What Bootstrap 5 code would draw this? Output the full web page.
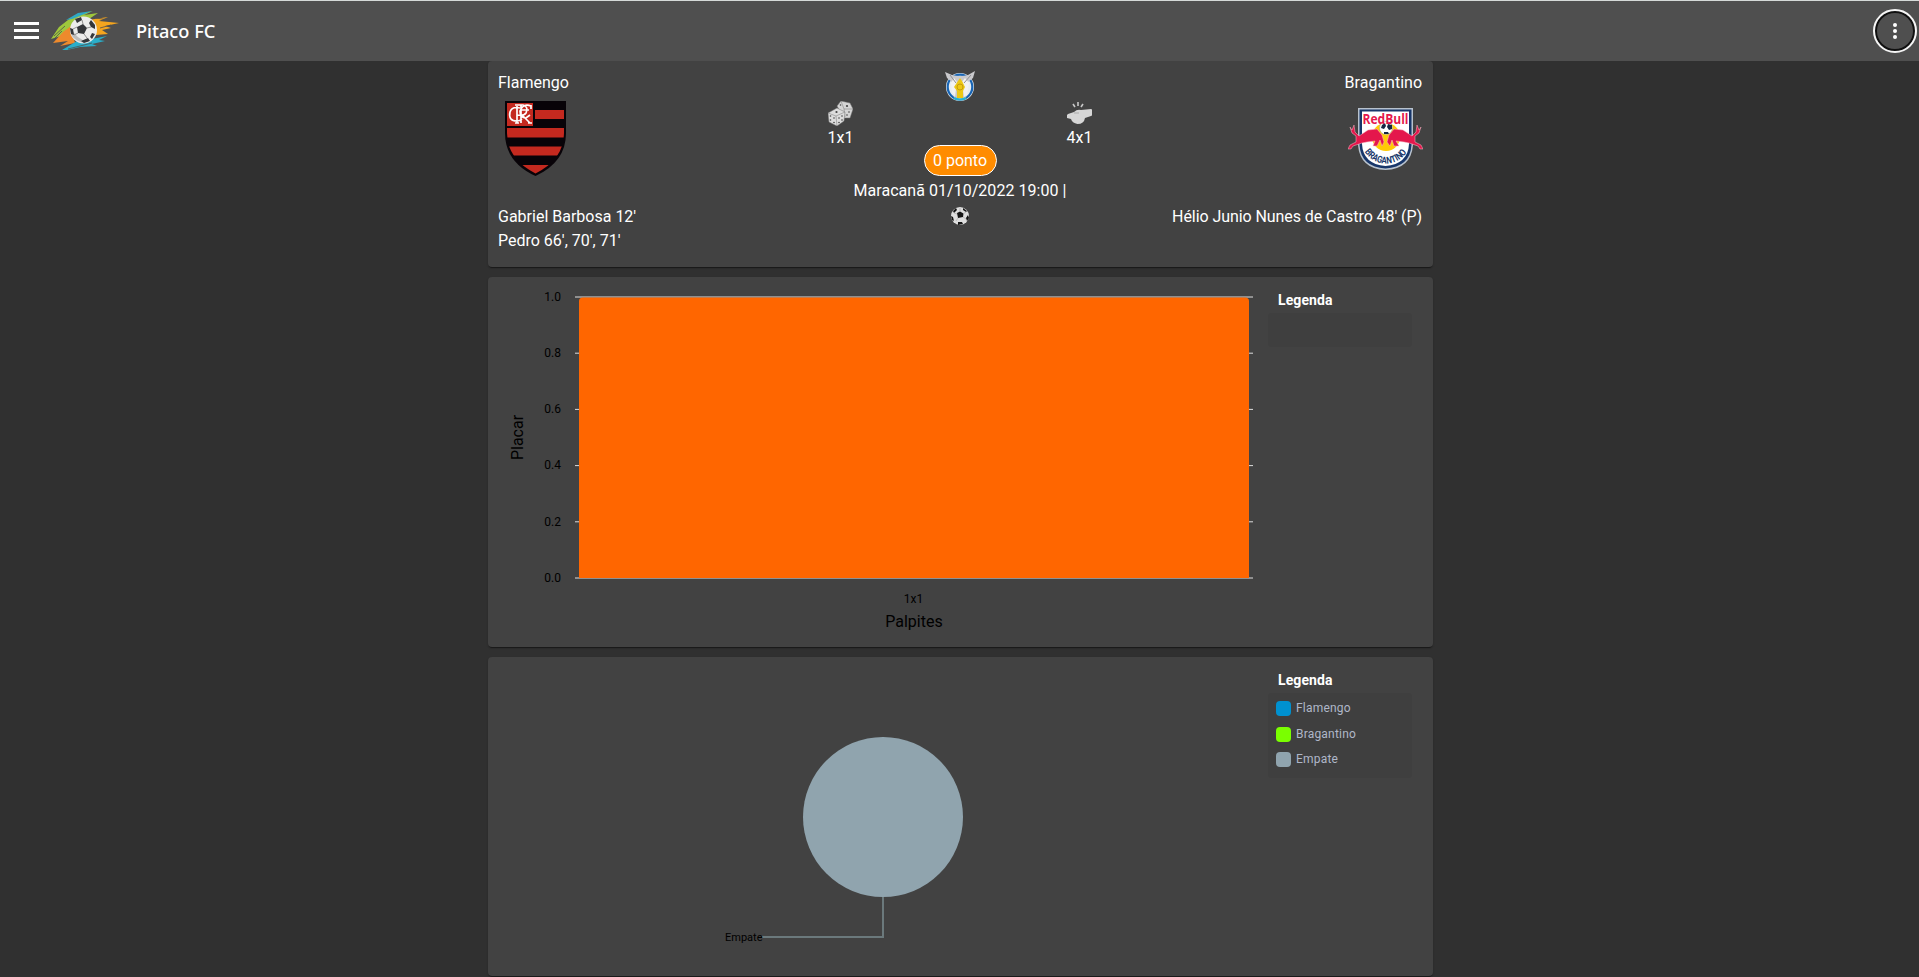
<!DOCTYPE html>
<html lang="pt-BR">
<head>
<meta charset="utf-8">
<meta name="viewport" content="width=device-width, initial-scale=1">
<title>Pitaco FC</title>
<link href="https://cdn.jsdelivr.net/npm/bootstrap@5.3.0/dist/css/bootstrap.min.css" rel="stylesheet">
<style>
body{background:#303030;color:#fff;font-family:Roboto,"Liberation Sans",sans-serif;font-size:16px;line-height:24px;height:977px;overflow:hidden}
svg{display:block;flex:none}
.topbar{height:61px;background:#4f4f4f;border-top:1px solid #d5dad8;padding:0 2px 0 14px}
.menu-icon{margin:-1px 11px 0 0}
.brand-name{font:500 18.2px/24px "Noto Sans","Open Sans",sans-serif;margin-left:16px}
.more-btn{width:44px;height:44px;border:2px solid #f5f5f5;box-shadow:inset 0 0 0 2px #101010;background:#4f4f4f}
.page{width:945px;margin-left:488px;gap:10px}
.panel{background:#424242;border-radius:4px;box-shadow:0 2px 1px -1px rgba(0,0,0,.4),0 1px 2px rgba(0,0,0,.2)}
.match{height:206px;padding:10px}
.match-grid{display:grid;grid-template-columns:223px 478px 224px}
.crest{margin-top:6px}
.guess{width:50%}
.points{background:#ff8c00;border:1px solid #fff;border-radius:16px;width:73px;height:31px;line-height:30px;margin-top:-5px}
.venue{margin-top:3px;letter-spacing:.04px}
.scorers{margin-top:2px}
.away-scorers{padding-right:1px;letter-spacing:-.07px}
.chart-bars{height:370px}
.chart-pie{height:319px}
.legend{width:144px;margin-left:-1px}
.legend h2{font-size:14px;line-height:20px;font-weight:700;margin:0;padding:13px 0 0 10px;height:33px;letter-spacing:.1px}
.legend-box{background:#3f3f3f;border-radius:4px;min-height:34px;margin-top:3px}
.legend-box.filled{height:85px;padding:8px 8px 0}
.legend-row{height:25.6px;font-size:12px;line-height:15px;color:#afb7c8;letter-spacing:.2px;gap:5px}
.swatch{width:15px;height:15px;border-radius:4px}
</style>
</head>
<body>
<header class="topbar d-flex align-items-center">
  <svg class="menu-icon" width="25" height="17" viewBox="0 0 25 17" fill="#fff"><path d="M0 0h25v3H0zM0 7h25v3H0zM0 14h25v3H0z"/></svg>
  <svg width="70" height="42" viewBox="0 0 70 42">
    <path d="M1 29L9 17 18 10 26 5 43 1 34 5 48 3 39 9 26 16 14 25Z" fill="#9fc73c"/>
    <path d="M16 10L28 3 42 1 32 5 22 9Z" fill="#2ea9c6"/>
    <path d="M38 10L58 7 49 11 69 13 55 16 61 18 52 20 58 24 46 25Z" fill="#f5a51e"/>
    <path d="M3 33L13 22 21 16 25 33 10 36 18 31Z" fill="#ee8a2c"/>
    <path d="M12 40L27 31 47 28 57 26 49 30 55 31 42 34 47 36 30 37 17 40Z" fill="#2aaec9"/>
    <path d="M4 26L15 16M2 31L12 21M46 8L59 10M50 18L61 15M18 39L42 33" stroke="#4f4f4f" stroke-width=".8"/>
    <circle cx="33.500" cy="20" r="13.500" fill="#ececec"/>
    <path d="M20.500 18A13 13 0 0 0 42 29Q31 35 20.500 18Z" fill="#bdbdbd"/>
    <path d="M27 17L33 14 37 18 34 24 28 23ZM25 9L31 7 32 10 27 13ZM41 10L45 15 45 19 41 17 39 13ZM20 18L23 19 24 25 21 24ZM31 31L38 28 40 31 34 33ZM42 23L45 24 42 29 40 27Z" fill="#34363a"/>
    <path d="M33 14L32 10M37 18L41 17M34 24L37 28M28 23L24 25M27 17L23 19" stroke="#777" stroke-width=".8"/>
  </svg>
  <span class="brand-name">Pitaco FC</span>
  <button class="more-btn rounded-circle p-0 ms-auto d-flex align-items-center justify-content-center" type="button" aria-label="Menu">
    <svg width="4" height="16" viewBox="0 0 4 16" fill="#fff"><circle cx="2" cy="2" r="2"/><circle cx="2" cy="8" r="2"/><circle cx="2" cy="14" r="2"/></svg>
  </button>
</header>

<main class="page d-flex flex-column">
  <section class="panel match">
    <div class="match-grid">
      <div>
        <div>Flamengo</div>
        <svg class="crest" width="75" height="75" viewBox="0 0 75 75">
          <defs><clipPath id="shield"><path d="M9 2H66V32Q66 58 37.500 72.500Q9 58 9 32Z"/></clipPath></defs>
          <path d="M7 0H68V32Q68 61 37.500 75Q7 61 7 32Z" fill="#080308"/>
          <g clip-path="url(#shield)" fill="#c4291f"><path d="M9 2H35V25H9ZM37 9H66V18H37ZM9 27H66V36.500H9ZM9 45.500H66V54.500H9ZM9 64H66V75H9Z"/></g>
          <g fill="none" stroke="#fff" stroke-width="1.700"><path d="M22 7Q14 5 12 11Q10 20 19 20Q22 20 24 18M19 22V5M17 4H25Q31 6 28 12Q26 15 19 14M24 14L32 22M23 4V22M33 5Q25 2 22 10Q22 17 28 17L32 14M23 9H31M17 22H21M30 22H34M33 4V8"/></g>
        </svg>
      </div>
      <div class="d-flex flex-column align-items-center">
        <svg width="30" height="30" viewBox="0 0 30 30">
          <circle cx="15" cy="16" r="14" fill="#e8edf0"/><circle cx="15" cy="16" r="12.300" fill="none" stroke="#1764b4" stroke-width="2.200"/>
          <path d="M0 1L7 4Q15 6 23 4L30 0 28 7 23 11 21 27Q15 30 9 27L7 11 2 7Z" fill="#c9c9cc"/>
          <path d="M9 7L12 11 10 26 7 21 6 12ZM20 7L24 12 22 24 19 26 17 11Z" fill="#f2f2f2"/><path d="M5 4L11 12M26 4L19 12" stroke="#8e8e92"/>
          <path d="M15 7L17 10 20 16 18 20V27H12V20L9 16 13 10Z" fill="#ecc815"/><circle cx="15" cy="16" r="3" fill="none" stroke="#c69c0c"/>
          <path d="M9 27Q15 30 21 27" stroke="#27b2d0" stroke-width="2" fill="none"/>
        </svg>
        <div class="d-flex w-100 text-center">
          <div class="guess d-flex flex-column align-items-center">
            <svg width="25" height="25" viewBox="0 0 25 25">
              <g fill="#d5d5d5" stroke="#777" stroke-width=".5"><path d="M9 5L13 0 22 2 25 8 22 17 16 17Z"/><path d="M13 0L16 8 25 8M16 8L17 16" fill="none"/>
              <path d="M0 12L9 7 17 11 16 20 9 25 1 21Z" fill="#dcdcdc"/><path d="M0 12L8 15 17 11M8 15L9 25" fill="none"/></g>
              <g fill="#444"><circle cx="8.500" cy="11" r="1.100"/><circle cx="2.500" cy="15" r=".8"/><circle cx="6" cy="17" r=".8"/><circle cx="2.500" cy="19" r=".8"/><circle cx="6" cy="21.500" r=".8"/><circle cx="11" cy="17" r=".8"/><circle cx="14" cy="15" r=".8"/><circle cx="11" cy="21.500" r=".8"/><circle cx="14" cy="19" r=".8"/><circle cx="19" cy="5" r="1.100"/><circle cx="12.500" cy="4" r=".8"/><circle cx="21" cy="11" r=".8"/><circle cx="19" cy="14" r=".8"/></g>
            </svg>
            <div>1x1</div>
          </div>
          <div class="guess d-flex flex-column align-items-center">
            <svg width="25" height="25" viewBox="0 0 25 25"><path d="M1 13Q4 12 7 11Q10 8 14 9L24 8Q25 8 25 9V14Q25 15 24 15L18 17Q17 23 10.500 23Q5 22 4 18L0 17V14Z" fill="#d6d6d6"/><path d="M6 3L8 6M11 1V5M16 3L14 6" stroke="#c8c8c8" stroke-width="1.600"/><path d="M7 12H12" stroke="#aaa"/></svg>
            <div>4x1</div>
          </div>
        </div>
        <div class="points text-center">0 ponto</div>
        <div class="venue">Maracanã 01/10/2022 19:00 |</div>
      </div>
      <div class="d-flex flex-column align-items-end">
        <div class="pe-1" style="margin-right:-3px">Bragantino</div>
        <svg class="crest" width="75" height="75" viewBox="0 0 75 75">
          <defs><path id="arc" d="M15.500 49Q24 62.500 38 62.500Q52 62.500 60.500 49"/></defs>
          <path d="M10 7H65V44Q63 68 37.500 69Q12 68 10 44Z" fill="#b8c2ce"/>
          <path d="M11.500 8.500H63.500V44Q62 66 37.500 67.500Q13 66 11.500 44Z" fill="#17366a"/>
          <path d="M14 10.500H61V43Q60 63 37.500 65Q15 63 14 43Z" fill="#fff"/>
          <circle cx="38" cy="36" r="14" fill="#ffcb05"/>
          <g fill="#e4174c" stroke="#f6bdc8" stroke-width=".5"><path d="M34 45L32 39 29 45H25L27 40 19 41 14 42 5 45 3 48H0L2 44 8 41V35L4 32 2 26 4 29 6 24 7 31 11 35 20 29 29 28 34 34 36 41Z"/><path d="M42 45L44 39 46 45H51L48 40 56 41 61 42 70 45 72 48H75L73 44 67 41V35L71 32 73 26 71 29 69 24 68 31 64 35 55 29 46 28 41 34 39 41Z"/></g>
          <circle cx="38" cy="27" r="6.500" fill="#fff" stroke="#999" stroke-width=".5"/><path d="M34 24l3-2 1 3-2 3-3-1zM40 23l4 1v4l-3 1-2-3zM36 31h4l1 2h-5z" fill="#172644"/>
          <text x="14.500" y="22.500" font-family="Open Sans" font-weight="700" font-size="13.500" textLength="46" lengthAdjust="spacingAndGlyphs" fill="#e4174c">RedBull</text>
          <text font-family="Roboto" font-weight="700" font-size="9.500" fill="#17366a"><textPath href="#arc" textLength="50" lengthAdjust="spacingAndGlyphs" startOffset="2">BRAGANTINO</textPath></text>
        </svg>
      </div>
      <div class="scorers">Gabriel Barbosa 12'<br>Pedro 66', 70', 71'</div>
      <div class="scorers d-flex justify-content-center">
        <svg width="18" height="18" viewBox="0 0 18 18" style="margin-top:2px"><circle cx="9" cy="9" r="9" fill="#dedede"/><path d="M6 6L9 4.500 12.500 6.500 12 10 7 11ZM2 4L5 1 6 3 3 6ZM12 1L16 4 15 5 12 3ZM0 9L2 10 3 14 1 13ZM17 8L18 11 16 14 15 11ZM7 15L11 15 12 17 7 18Z" fill="#151515"/><path d="M9 4V1M12 7L15 5M12 10L15 12M7 11L5 14M6 7L3 6" stroke="#aaa" stroke-width=".7"/></svg>
      </div>
      <div class="scorers away-scorers text-nowrap d-flex justify-content-end">Hélio Junio Nunes de Castro 48' (P)</div>
    </div>
  </section>

  <section class="panel chart-bars d-flex">
    <svg width="781" height="370" viewBox="0 0 781 370" font-family="Roboto" font-size="12">
      <path d="M87 20H765M87 76.200H765M87 132.400H765M87 188.600H765M87 244.800H765M87 301H765" stroke="#ddd"/>
      <path d="M91 301V24Q91 20.500 95 20.500H757Q761 20.500 761 24V301Z" fill="#f60"/>
      <g text-anchor="end"><text x="73" y="24">1.0</text><text x="73" y="80">0.8</text><text x="73" y="136">0.6</text><text x="73" y="192">0.4</text><text x="73" y="249">0.2</text><text x="73" y="305">0.0</text></g>
      <text x="425.500" y="326" text-anchor="middle">1x1</text>
      <text x="426" y="350" text-anchor="middle" font-size="16">Palpites</text>
      <text transform="translate(35 160.500) rotate(-90)" text-anchor="middle" font-size="16">Placar</text>
    </svg>
    <aside class="legend"><h2>Legenda</h2><div class="legend-box"></div></aside>
  </section>

  <section class="panel chart-pie d-flex">
    <svg width="781" height="319" viewBox="0 0 781 319" font-family="Roboto" font-size="11">
      <circle cx="395" cy="160" r="80" fill="#90a4ae"/>
      <path d="M395 240V280H274" fill="none" stroke="#6b797c" stroke-width="2"/>
      <text x="237" y="284" textLength="37.500">Empate</text>
    </svg>
    <aside class="legend"><h2>Legenda</h2>
      <div class="legend-box filled">
        <div class="legend-row d-flex"><span class="swatch" style="background:#0091d0"></span>Flamengo</div>
        <div class="legend-row d-flex"><span class="swatch" style="background:#7aff00"></span>Bragantino</div>
        <div class="legend-row d-flex"><span class="swatch" style="background:#90a4ae"></span>Empate</div>
      </div>
    </aside>
  </section>
</main>
<script src="https://cdn.jsdelivr.net/npm/bootstrap@5.3.0/dist/js/bootstrap.bundle.min.js"></script>
</body>
</html>
